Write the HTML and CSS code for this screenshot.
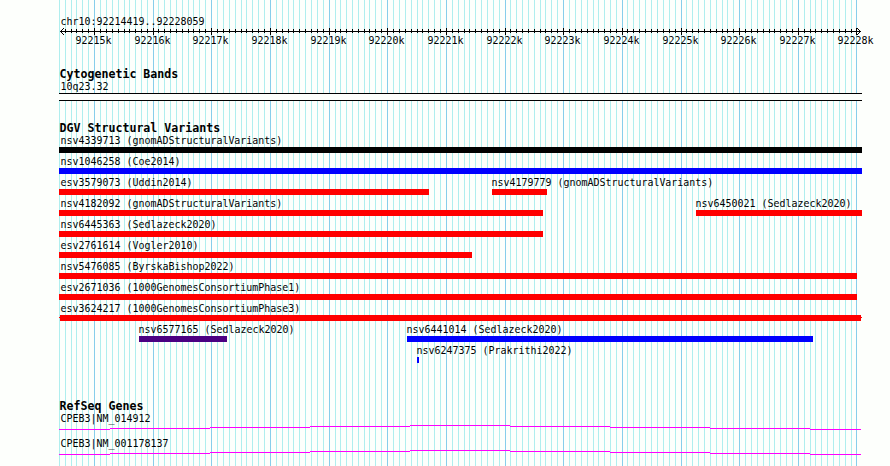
FILE: index.html
```
<!DOCTYPE html>
<html>
<head>
    <meta charset="utf-8">
    <title>chr10:92214419..92228059</title>
    <link rel="stylesheet" href="styles.css">
</head>
<body>
    <div class="panel">
        <svg class="grid" width="890" height="466" shape-rendering="crispEdges">
            <path id="gridMinor" class="grid-minor"/>
            <path id="gridMajor" class="grid-major"/>
        </svg>

        <div class="ruler">
            <div class="label">chr10:92214419..92228059</div>
            <svg class="axis" width="803" height="7" viewBox="59 28 803 7" shape-rendering="crispEdges">
                <path d="M60 31.5H861"/>
                <path id="ticks"/>
                <path d="M61 30.5h1M62 29.5h1M63 28.5h1M61 32.5h1M62 33.5h1M63 34.5h1"/>
                <path d="M859 30.5h1M858 29.5h1M857 28.5h1M859 32.5h1M858 33.5h1M857 34.5h1"/>
            </svg>
            <div class="scale" id="scale"></div>
        </div>

        <div class="track cyto">
            <h2>Cytogenetic Bands</h2>
            <div class="label">10q23.32</div>
            <div class="band"></div>
        </div>

        <div class="track variants">
            <h2>DGV Structural Variants</h2>
            <div id="variants"></div>
        </div>

        <div class="track genes">
            <h2>RefSeq Genes</h2>
            <div class="gene">
                <div class="label">CPEB3|NM_014912</div>
                <svg class="intron" width="803" height="5" viewBox="59 0 803 5" shape-rendering="crispEdges">
                    <path d="M59 4.5H110M110 3.5H210M210 2.5H310M310 1.5H410M410 .5H510M510 1.5H610M610 2.5H710M710 3.5H810M810 4.5H861"/>
                </svg>
            </div>
            <div class="gene">
                <div class="label">CPEB3|NM_001178137</div>
                <svg class="intron" width="803" height="5" viewBox="59 0 803 5" shape-rendering="crispEdges">
                    <path d="M59 4.5H110M110 3.5H210M210 2.5H310M310 1.5H410M410 .5H510M510 1.5H610M610 2.5H710M710 3.5H810M810 4.5H861"/>
                </svg>
            </div>
        </div>
    </div>
    <script src="script.js"></script>
</body>
</html>
```
FILE: styles.css
```
body {
    margin: 0;
    background-color: #fdfffc;
    color: #000;
    font-family: 'DejaVu Sans Mono', monospace;
    overflow: hidden;
}

.panel {
    position: relative;
    box-sizing: border-box;
    width: 890px;
    height: 466px;
    padding: 16px 28px 0 59px;
    overflow: hidden;
}

.panel > div {
    position: relative;
}

svg {
    display: block;
}

/* Background grid, runs behind every track */
.grid {
    position: absolute;
    left: 0;
    top: 0;
}

.grid-minor {
    stroke: #afeeee;
}

.grid-major {
    stroke: #87ceeb;
}

/* Text */
.label {
    height: 12px;
    padding-left: 1.6px;
    font-size: 9.967px;
    line-height: 12px;
    white-space: pre;
}

h2 {
    height: 10px;
    margin: 0;
    padding: 0 0 2px 0.5px;
    font-size: 11.628px;
    line-height: 10px;
    font-weight: bold;
    white-space: pre;
}

/* Ruler */
.axis path {
    stroke: #000;
    fill: none;
}

.scale {
    display: flex;
    padding-left: 16.6px;
    height: 12px;
    font-size: 9.967px;
    line-height: 12px;
}

.scale span {
    flex: none;
}

/* Tracks */
.cyto {
    margin-top: 22px;
}

.band {
    height: 6px;
    border-top: 1px solid #000;
    border-bottom: 1px solid #000;
    background-color: #fdfffc;
}

.variants {
    margin-top: 22px;
}

.row {
    display: flex;
    height: 21px;
}

.feature {
    flex: none;
}

.feature .label {
    width: 0;
}

.feature.inset .label {
    padding-left: 0.6px;
    margin-left: -1px;
}

.bar {
    height: 6px;
}

.black { background-color: #000; }
.blue { background-color: #00f; }
.red { background-color: #f00; }
.purple { background-color: #4b0082; }

/* Uncertain ends: 1px whiskers either side of the bar */
.whiskers {
    background: linear-gradient(#f00, #f00) 1px 0 / 801px 6px no-repeat,
        linear-gradient(#f00, #f00) 0 2px / 803px 1px no-repeat;
}

.genes {
    margin-top: 35px;
}

.gene {
    height: 25px;
}

.intron path {
    stroke: #f0f;
}
```
FILE: script.js
```
const LEFT = 59;

// [name, colour, first pixel, end pixel], one list for each row
const rows = [
    [['nsv4339713 (gnomADStructuralVariants)', 'black', 59, 862]],
    [['nsv1046258 (Coe2014)', 'blue', 59, 862]],
    [['esv3579073 (Uddin2014)', 'red', 59, 429], ['nsv4179779 (gnomADStructuralVariants)', 'red', 492, 547]],
    [['nsv4182092 (gnomADStructuralVariants)', 'red', 59, 543], ['nsv6450021 (Sedlazeck2020)', 'red', 696, 862]],
    [['nsv6445363 (Sedlazeck2020)', 'red', 59, 543]],
    [['esv2761614 (Vogler2010)', 'red', 59, 472]],
    [['nsv5476085 (ByrskaBishop2022)', 'red', 59, 857]],
    [['esv2671036 (1000GenomesConsortiumPhase1)', 'red', 59, 857]],
    [['esv3624217 (1000GenomesConsortiumPhase3)', 'whiskers', 59, 862]],
    [['nsv6577165 (Sedlazeck2020)', 'purple', 139, 227], ['nsv6441014 (Sedlazeck2020)', 'blue', 407, 813]],
    [['nsv6247375 (Prakrithi2022)', 'blue', 417, 419]]
];

let html = '';
for (const row of rows) {
    let x = LEFT;
    html += '<div class="row">';
    for (const [name, color, start, end] of row) {
        const inset = start > LEFT ? ' inset' : '';
        html += `<div class="feature${inset}" style="margin-left:${start - x}px;width:${end - start}px">` +
            `<div class="label">${name}</div><div class="bar ${color}"></div></div>`;
        x = end;
    }
    html += '</div>';
}
document.getElementById('variants').innerHTML = html;

// 100 bp is 6px, or 5px after one of these
const narrow = [71, 124, 153, 188, 241, 288, 335, 364, 417, 464, 505, 540, 593, 622, 681, 722, 769, 810, 851];
let minor = '', major = '', ticks = '', scale = '';
let labelEnd = 75;
for (let x = 59, i = 0; x <= 856; x += narrow.includes(x) ? 5 : 6, i++) {
    if (i % 10 == 6) {
        major += `M${x + 0.5} 0V466`;
        ticks += `M${x + 0.5} 28V35`;
        scale += `<span style="margin-left:${x - 19 - labelEnd}px;width:36px">${92215 + (i - 6) / 10}k</span>`;
        labelEnd = x + 17;
    } else {
        minor += `M${x + 0.5} 0V466`;
        if (x > 60) ticks += `M${x + 0.5} 29V33`;
    }
}
document.getElementById('gridMinor').setAttribute('d', minor);
document.getElementById('gridMajor').setAttribute('d', major);
document.getElementById('ticks').setAttribute('d', ticks);
document.getElementById('scale').innerHTML = scale;
```
